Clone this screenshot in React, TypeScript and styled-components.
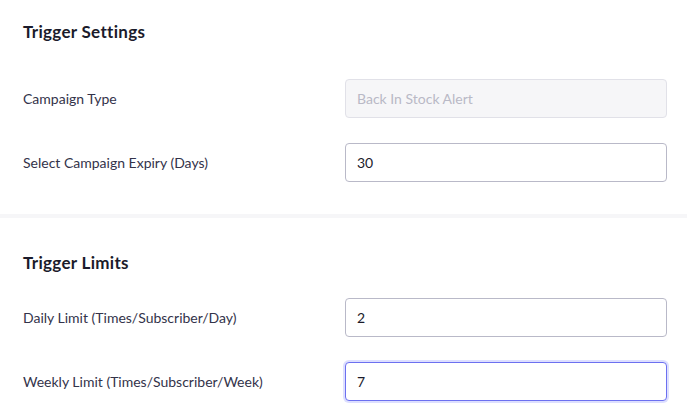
import React from "react";
import styled, { createGlobalStyle, css } from "styled-components";

const Global = createGlobalStyle`
  html, body { margin: 0; padding: 0; background: #ffffff; }
  body { font-family: Lato, "Noto Sans", sans-serif; -webkit-font-smoothing: antialiased; }
  * { box-sizing: border-box; }
`;

const Page = styled.div`
  width: 687px;
  height: 418px;
  overflow: hidden;
  background: #ffffff;
`;

const Section = styled.section<{ $top: number; $bottom: number }>`
  padding: ${(p) => p.$top}px 20px ${(p) => p.$bottom}px 23px;
`;

const Heading = styled.h2<{ $gap: number }>`
  margin: 0 0 ${(p) => p.$gap}px 0;
  font-size: 17px;
  letter-spacing: 0.3px;
  line-height: 24px;
  font-weight: 700;
  color: #1b1b2b;
`;

const Rows = styled.div`
  display: flex;
  flex-direction: column;
  gap: 25px;
`;

const Row = styled.div`
  display: grid;
  grid-template-columns: 1fr 322px;
  align-items: center;
`;

const Label = styled.label`
  font-size: 14px;
  color: #33334a;
`;

const Input = styled.input<{ $focused?: boolean }>`
  width: 322px;
  height: 39px;
  padding: 0 11px;
  border: 1px solid #b9b9c8;
  border-radius: 4px;
  font-family: Lato, "Noto Sans", sans-serif;
  font-size: 14px;
  color: #1b1b2b;
  background: #ffffff;
  outline: none;
  &:disabled {
    background: #f6f6f8;
    border-color: #e1e1e8;
    color: #b9b9c6;
  }
  ${(p) =>
    p.$focused &&
    css`
      border-color: #6c70f0;
      box-shadow: 0 0 0 2px rgba(120, 126, 255, 0.25);
    `}
`;

const Divider = styled.div`
  height: 4px;
  background: #f6f6f8;
`;

export default function App() {
  return (
    <Page>
      <Global />
      <Section $top={20} $bottom={32}>
        <Heading $gap={35}>Trigger Settings</Heading>
        <Rows>
          <Row>
            <Label>Campaign Type</Label>
            <Input disabled defaultValue="Back In Stock Alert" />
          </Row>
          <Row>
            <Label>Select Campaign Expiry (Days)</Label>
            <Input defaultValue="30" />
          </Row>
        </Rows>
      </Section>
      <Divider />
      <Section $top={33} $bottom={16}>
        <Heading $gap={23}>Trigger Limits</Heading>
        <Rows>
          <Row>
            <Label>Daily Limit (Times/Subscriber/Day)</Label>
            <Input defaultValue="2" />
          </Row>
          <Row>
            <Label>Weekly Limit (Times/Subscriber/Week)</Label>
            <Input $focused autoFocus defaultValue="7" />
          </Row>
        </Rows>
      </Section>
    </Page>
  );
}
